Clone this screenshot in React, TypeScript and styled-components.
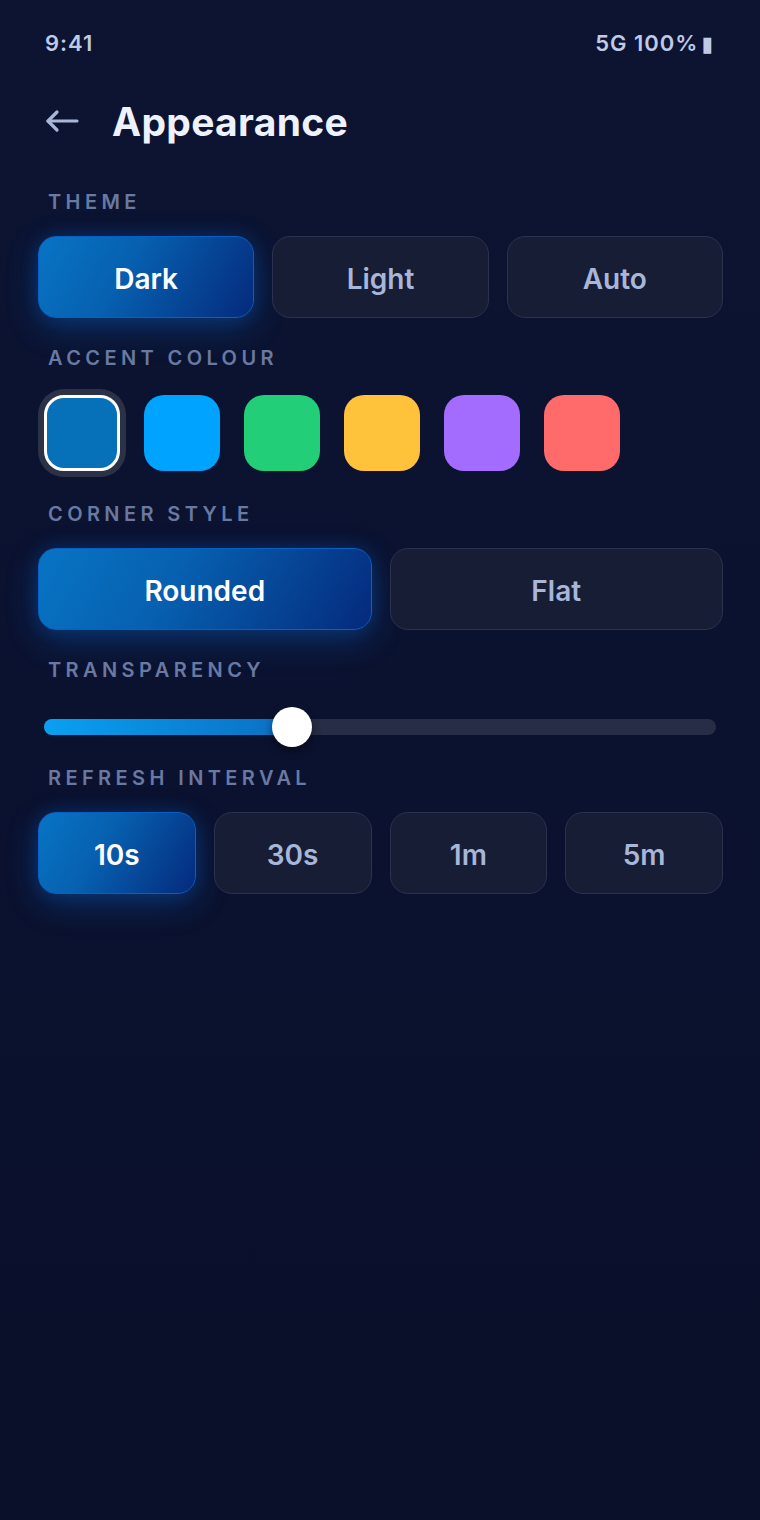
import React from "react"
import styled, { createGlobalStyle, css } from "styled-components"

const GlobalStyle = createGlobalStyle`
  html, body {
    margin: 0;
    padding: 0;
    background: #0b1230;
  }
  body {
    font-family: Inter, "Noto Sans", sans-serif;
    -webkit-font-smoothing: antialiased;
  }`

const Screen = styled.div`
  width: 760px;
  min-height: 1520px;
  background: linear-gradient(180deg, #0c1432 0%, #0b1230 50%, #0a1029 100%);
  box-sizing: border-box;
  display: flex;
  flex-direction: column;`

const StatusBar = styled.div`
  height: 86px;
  padding: 0 46px 0 45px;
  display: flex;
  justify-content: space-between;
  align-items: center;
  color: #bfcae6;
  font-size: 22px;
  font-weight: 600;
  letter-spacing: 1px;`

const Battery = styled.span`
  font-family: "DejaVu Sans", sans-serif;
  font-size: 21px;
  margin-left: 3px;`

const Header = styled.div`
  height: 70px;
  padding-left: 45px;
  display: flex;
  align-items: center;
  gap: 33px;`

const BackIcon = styled.svg`
  width: 34px;
  height: 24px;
  color: #a9b6d8;
  flex-shrink: 0;`

const Title = styled.h1`
  margin: 0;
  color: #eef2ff;
  font-size: 39px;
  font-weight: 700;
  letter-spacing: 0.3px;`

const Content = styled.div`
  padding: 35px 37px 0 38px;
  display: flex;
  flex-direction: column;
  gap: 29px;`

const Section = styled.section`
  display: flex;
  flex-direction: column;
  gap: 23px;`

const Label = styled.div`
  height: 22px;
  line-height: 22px;
  padding-left: 10px;
  color: #6a79a2;
  font-size: 20px;
  font-weight: 600;
  letter-spacing: 4.4px;
  text-transform: uppercase;`

const ButtonRow = styled.div<{ $cols: number }>`
  display: grid;
  grid-template-columns: repeat(${p => p.$cols}, 1fr);
  gap: 18px;`

const OptionButton = styled.button<{ $active?: boolean }>`
  height: 82px;
  padding: 4px 0 0;
  border-radius: 18px;
  font-family: Inter, "Noto Sans", sans-serif;
  font-size: 28px;
  font-weight: 600;
  cursor: pointer;
  ${p => p.$active ? css`
    color: #ffffff;
    background: linear-gradient(120deg, #0874c4 0%, #0760b0 40%, #052a7c 100%);
    border: 1px solid #0a5fc4;
    box-shadow: 0 10px 32px rgba(8, 110, 220, 0.32), 0 0 18px rgba(8, 100, 210, 0.22);
  ` : css`
    color: #a8b6da;
    background: #161d34;
    border: 1.5px solid #2a3250;
  `}`

const SwatchRow = styled.div`
  display: flex;
  gap: 24px;
  padding: 3px 0 3px 6px;`

const Swatch = styled.div<{ $color: string; $selected?: boolean }>`
  width: 76px;
  height: 76px;
  box-sizing: border-box;
  border-radius: 20px;
  background: ${p => p.$color};
  ${p => p.$selected && css`
    border: 3px solid #ffffff;
    box-shadow: 0 0 0 6px #2b3247;
  `}`

const SliderWrap = styled.div`
  position: relative;
  padding: 15px 7px 3px 6px;`

const Track = styled.div`
  position: relative;
  height: 16px;
  border-radius: 8px;
  background: #262d44;`

const Fill = styled.div`
  height: 100%;
  border-radius: 8px;
  background: linear-gradient(90deg, #0aa0f2 0%, #0a6fc2 100%);`

const Thumb = styled.div`
  position: absolute;
  top: 50%;
  width: 40px;
  height: 40px;
  border-radius: 50%;
  background: #ffffff;
  transform: translate(-50%, -50%);
  box-shadow: 0 4px 10px rgba(0, 0, 0, 0.45);`

const themes = ["Dark", "Light", "Auto"]
const swatches = ["#0670b8", "#00a3ff", "#22cf78", "#ffc23a", "#a36cff", "#ff6b6b"]
const corners = ["Rounded", "Flat"]
const intervals = ["10s", "30s", "1m", "5m"]
const transparency = 36.9

export default function App() {
  return (
    <>
      <GlobalStyle />
      <Screen>
        <StatusBar>
          <span>9:41</span>
          <span>5G 100%<Battery>▮</Battery></span>
        </StatusBar>
        <Header>
          <BackIcon viewBox="0 0 34 24" fill="none" stroke="currentColor" strokeWidth="3.2" strokeLinecap="round" strokeLinejoin="round">
            <path d="M32 12H3" />
            <path d="M12 3L3 12L12 21" />
          </BackIcon>
          <Title>Appearance</Title>
        </Header>
        <Content>
          <Section>
            <Label>Theme</Label>
            <ButtonRow $cols={3}>
              {themes.map((t, i) => (
                <OptionButton key={t} $active={i === 0}>{t}</OptionButton>
              ))}
            </ButtonRow>
          </Section>
          <Section>
            <Label>Accent Colour</Label>
            <SwatchRow>
              {swatches.map((c, i) => (
                <Swatch key={c} $color={c} $selected={i === 0} />
              ))}
            </SwatchRow>
          </Section>
          <Section>
            <Label>Corner Style</Label>
            <ButtonRow $cols={2}>
              {corners.map((c, i) => (
                <OptionButton key={c} $active={i === 0}>{c}</OptionButton>
              ))}
            </ButtonRow>
          </Section>
          <Section>
            <Label>Transparency</Label>
            <SliderWrap>
              <Track>
                <Fill style={{ width: `${transparency}%` }} />
                <Thumb style={{ left: `${transparency}%` }} />
              </Track>
            </SliderWrap>
          </Section>
          <Section>
            <Label>Refresh Interval</Label>
            <ButtonRow $cols={4}>
              {intervals.map((t, i) => (
                <OptionButton key={t} $active={i === 0}>{t}</OptionButton>
              ))}
            </ButtonRow>
          </Section>
        </Content>
      </Screen>
    </>
  )
}
